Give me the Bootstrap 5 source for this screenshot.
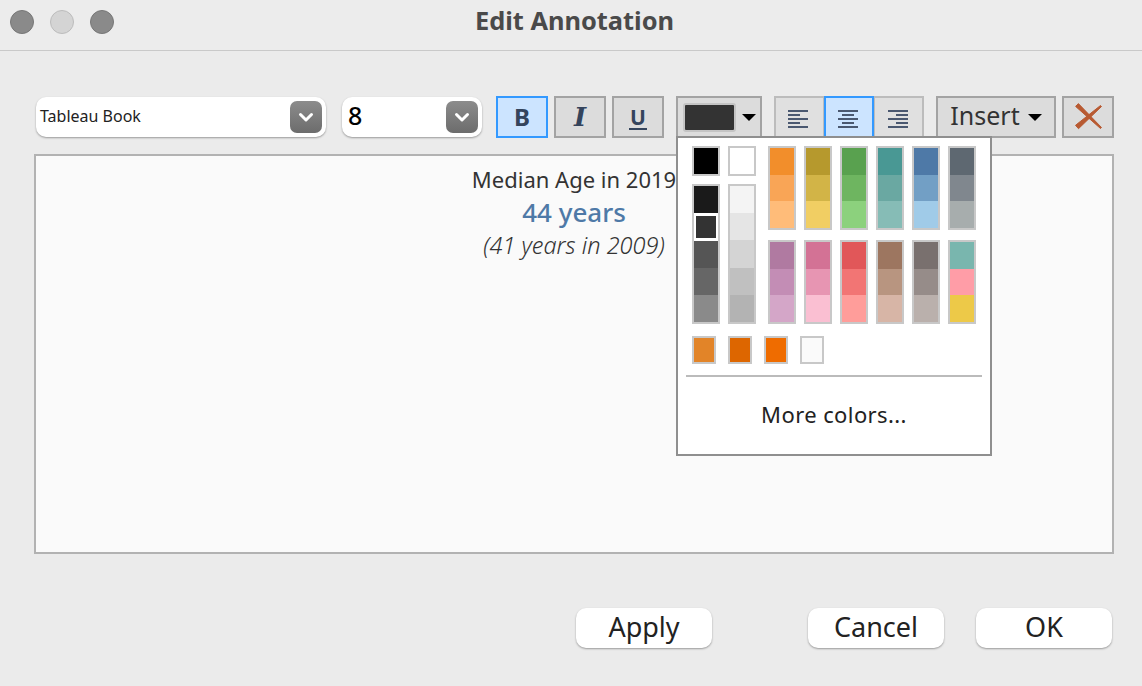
<!DOCTYPE html>
<html lang="en">
<head>
  <meta charset="UTF-8" />
  <meta name="viewport" content="width=device-width, initial-scale=1.0" />
  <title>Edit Annotation</title>
  <link href="https://cdn.jsdelivr.net/npm/bootstrap@5.3.0/dist/css/bootstrap.min.css" rel="stylesheet" />
  <style>
    body { background: #ebebeb; font-family: "Noto Sans", sans-serif; color: #333; height: 686px; overflow: hidden; }
    .title-bar { height: 51px; border-bottom: 1px solid #c9c9c9; background: #ececec; padding-left: 7px; }
    .title-text { font-size: 25.4px; font-weight: 700; color: #4a4a4a; line-height: 1; margin-top: -9px; }
    .light-row { left: 10px; top: 10px; gap: 16px; }
    .light-dot { width: 24px; height: 24px; border-radius: 50%; background: #8a8a8a; border: 1px solid #777; }
    .light-dot.off { background: #d4d4d4; border-color: #bcbcbc; }
    .dialog-body { padding: 45px 28px 0 34px; }
    .tool-row { height: 42px; }
    .combo-box { height: 40px; margin-top: 1px; background: #fff; border-radius: 10px; box-shadow: 0 1px 2px rgba(0,0,0,.35); padding: 0 4px; font-size: 16px; color: #222; }
    .combo-label { margin-top: -2px; }
    .combo-font { width: 290px; margin-left: 2px; margin-right: 16px; }
    .combo-size { width: 140px; margin-right: 14px; font-size: 25px; font-weight: 500; color: #000; padding-left: 6px; }
    .combo-arrow { width: 32px; height: 32px; border-radius: 7px; background: linear-gradient(#8c8c8c, #6c6c6c); }
    .tool-trio { gap: 6px; }
    .tool-btn { width: 52px; height: 42px; padding: 0; background: #dcdcdc; border: 2px solid #a3a3a3; border-radius: 0; color: #34445c; font-size: 24px; font-weight: 700; line-height: 1; }
    .tool-btn.on { background: #cce4ff; border-color: #3399ff; }
    .tool-btn.italic-btn { font-family: "DejaVu Serif", serif; font-style: italic; font-size: 26px; }
    .under-mark { border-bottom: 2px solid #34445c; padding: 0 1px; display: inline-block; line-height: 1.05; font-size: 21px; }
    .caret-mark { width: 0; height: 0; border-left: 7px solid transparent; border-right: 7px solid transparent; border-top: 7px solid #000; }
    .color-wrap { margin-left: 12px; }
    .color-btn { width: 86px; padding-left: 5px; padding-right: 4px; }
    .color-chip { width: 53px; height: 29px; background: #333; border: 2px solid #c4c4c4; border-radius: 3px; }
    .align-group { margin-left: 12px; width: 150px; height: 42px; }
    .align-btn { flex: 1 1 0; height: 42px; padding: 0 2px 0 0; background: #e0e0e0; border: 2px solid #bcbcbc; border-radius: 0; }
    .align-btn + .align-btn { margin-left: -2px; }
    .align-btn.on { background: #cce4ff; border-color: #3399ff; position: relative; z-index: 1; }
    .insert-btn { width: 120px; margin-left: 12px; font-size: 25px; font-weight: 400; color: #333; gap: 8px; }
    .insert-label { margin-top: -4px; }
    .close-btn { margin-left: 6px; }
    .color-menu { display: block; left: 0; top: 40px; width: 316px; height: 320px; padding: 8px 0 0 14px; margin: 0; background: #fff; border: 2px solid #8f8f8f; border-radius: 0; z-index: 5; }
    .swatch-cell { width: 28px; height: 30px; border: 2px solid #c8c8c8; }
    .swatch-stack { width: 28px; border: 2px solid #c8c8c8; display: flex; flex-direction: column; }
    .stack-tall { height: 140px; }
    .stack-mid { height: 84px; }
    .swatch-left { gap: 8px; width: 64px; margin-right: 12px; }
    .swatch-grid { display: grid; grid-template-columns: repeat(6, 28px); column-gap: 8px; row-gap: 10px; }
    .stack-seg { flex: 1 1 28px; }
    .stack-seg.picked { border-style: solid; border-color: #fff; border-width: 3px 2px; }
    .recent-row { gap: 12px; margin-top: 12px; }
    .recent-chip { width: 24px; height: 28px; border: 2px solid #c8c8c8; }
    .menu-line { width: 296px; margin: 11px 0 0 -6px; height: 2px; background: #bbb; }
    .more-colors { width: 296px; margin: 0 0 0 -6px; padding-top: 24px; font-size: 22px; letter-spacing: .4px; line-height: 27px; color: #222; text-align: center; }
    .editor-box { height: 400px; margin-top: 16px; background: #fafafa; border: 2px solid #b2b2b2; padding-top: 9px; text-align: center; }
    .note-title { font-size: 22px; line-height: 28px; color: #333; }
    .note-value { font-size: 26px; line-height: 38px; font-weight: 500; color: #4e79a7; }
    .note-sub { font-size: 23.5px; line-height: 28px; font-style: italic; font-weight: 300; color: #333; }
    .footer-row { margin-top: 54px; padding-right: 2px; }
    .plain-btn { width: 136px; height: 40px; padding: 0 0 4px; background: #fff; border: 0; border-radius: 10px; box-shadow: 0 1px 2px rgba(0,0,0,.35); font-size: 27px; line-height: 1; color: #222; }
    .apply-btn { margin-right: 96px; }
    .cancel-btn { margin-right: 32px; }
  </style>
</head>
<body>
  <div class="title-bar position-relative d-flex align-items-center justify-content-center">
    <div class="light-row position-absolute d-flex">
      <span class="light-dot"></span>
      <span class="light-dot off"></span>
      <span class="light-dot"></span>
    </div>
    <div class="title-text">Edit Annotation</div>
  </div>

  <div class="dialog-body">
    <div class="tool-row d-flex">
      <div class="combo-box combo-font d-flex align-items-center justify-content-between">
        <span class="combo-label">Tableau Book</span>
        <span class="combo-arrow d-flex align-items-center justify-content-center">
          <svg width="16" height="11" viewBox="0 0 16 11"><path d="M2.5 2.5l5.5 5.5 5.5-5.5" fill="none" stroke="#fff" stroke-width="3" stroke-linecap="round" stroke-linejoin="round" /></svg>
        </span>
      </div>
      <div class="combo-box combo-size d-flex align-items-center justify-content-between">
        <span class="combo-label">8</span>
        <span class="combo-arrow d-flex align-items-center justify-content-center">
          <svg width="16" height="11" viewBox="0 0 16 11"><path d="M2.5 2.5l5.5 5.5 5.5-5.5" fill="none" stroke="#fff" stroke-width="3" stroke-linecap="round" stroke-linejoin="round" /></svg>
        </span>
      </div>

      <div class="d-flex tool-trio">
        <button class="btn tool-btn on" type="button">B</button>
        <button class="btn tool-btn italic-btn" type="button">I</button>
        <button class="btn tool-btn" type="button"><span class="under-mark">U</span></button>
      </div>

      <div class="color-wrap position-relative">
        <button class="btn tool-btn color-btn d-flex align-items-center justify-content-between" type="button">
          <span class="color-chip"></span>
          <span class="caret-mark"></span>
        </button>
        <div class="dropdown-menu show color-menu">
          <div class="d-flex">
            <div class="swatch-left d-flex flex-wrap align-content-start" id="left-swatches"></div>
            <div class="swatch-grid" id="color-swatches"></div>
          </div>
          <div class="recent-row d-flex" id="recent-swatches"></div>
          <div class="menu-line"></div>
          <div class="more-colors">More colors...</div>
        </div>
      </div>

      <div class="btn-group align-group d-flex" role="group">
        <button class="btn align-btn" type="button">
          <svg width="20" height="18" viewBox="0 0 20 18"><path d="M0 1h20M0 5h12M0 9h20M0 13h12M0 17h20" stroke="#4a5870" stroke-width="2" /></svg>
        </button>
        <button class="btn align-btn on" type="button">
          <svg width="20" height="18" viewBox="0 0 20 18"><path d="M0 1h20M4 5h12M0 9h20M4 13h12M0 17h20" stroke="#4a5870" stroke-width="2" /></svg>
        </button>
        <button class="btn align-btn" type="button">
          <svg width="20" height="18" viewBox="0 0 20 18"><path d="M0 1h20M8 5h12M0 9h20M8 13h12M0 17h20" stroke="#4a5870" stroke-width="2" /></svg>
        </button>
      </div>

      <button class="btn tool-btn insert-btn d-flex align-items-center justify-content-center" type="button">
        <span class="insert-label">Insert</span><span class="caret-mark"></span>
      </button>
      <button class="btn tool-btn close-btn d-flex align-items-center justify-content-center" type="button">
        <svg width="28" height="28" viewBox="0 0 28 28"><path d="M1.6 3.4L4.4.6l23.1 23.9-1 1zM1.5 22.3L26.5 2.5l1 1L4.5 25.7z" fill="#b85a32" stroke="#b85a32" stroke-linejoin="round" /></svg>
      </button>
    </div>

    <div class="editor-box">
      <div class="note-title">Median Age in 2019</div>
      <div class="note-value">44 years</div>
      <div class="note-sub">(41 years in 2009)</div>
    </div>

    <div class="footer-row d-flex justify-content-end">
      <button class="btn plain-btn apply-btn" type="button">Apply</button>
      <button class="btn plain-btn cancel-btn" type="button">Cancel</button>
      <button class="btn plain-btn" type="button">OK</button>
    </div>
  </div>

  <script>
    const colorStacks = [
      ["#f28e2b", "#f9a556", "#ffbc79"],
      ["#b6992d", "#d2b447", "#f1ce63"],
      ["#59a14f", "#6eb560", "#8cd17d"],
      ["#499894", "#6aa8a2", "#86bcb6"],
      ["#4e79a7", "#729fc5", "#a0cbe8"],
      ["#5e6871", "#80878e", "#a7adad"],
      ["#b07aa1", "#c38db5", "#d4a6c8"],
      ["#d37295", "#e795b2", "#fabfd2"],
      ["#e15759", "#f27574", "#ff9d9a"],
      ["#9d7660", "#b89580", "#d7b5a6"],
      ["#79706e", "#968c89", "#bab0ac"],
      ["#79b6ae", "#ff9da7", "#edc948"]
    ];
    const grayStacks = [
      ["#1a1a1a", "#333333", "#555555", "#666666", "#8a8a8a"],
      ["#f4f4f4", "#e5e5e5", "#d4d4d4", "#c0c0c0", "#b3b3b3"]
    ];
    const recentColors = ["#e28428", "#dd6600", "#ef6c00", "#fafafa"];

    function makeStack(colors, sizeClass) {
      const stack = document.createElement("div");
      stack.className = "swatch-stack " + sizeClass;
      colors.forEach(color => {
        const seg = document.createElement("div");
        seg.className = "stack-seg" + (color === "#333333" ? " picked" : "");
        seg.style.backgroundColor = color;
        stack.appendChild(seg);
      });
      return stack;
    }

    function makeChip(color, className) {
      const chip = document.createElement("div");
      chip.className = className;
      chip.style.backgroundColor = color;
      return chip;
    }

    const left = document.getElementById("left-swatches");
    left.appendChild(makeChip("#000000", "swatch-cell"));
    left.appendChild(makeChip("#ffffff", "swatch-cell"));
    grayStacks.forEach(colors => left.appendChild(makeStack(colors, "stack-tall")));

    const grid = document.getElementById("color-swatches");
    colorStacks.forEach(colors => grid.appendChild(makeStack(colors, "stack-mid")));

    const recent = document.getElementById("recent-swatches");
    recentColors.forEach(color => recent.appendChild(makeChip(color, "recent-chip")));
  </script>
  <script src="https://cdn.jsdelivr.net/npm/bootstrap@5.3.0/dist/js/bootstrap.bundle.min.js"></script>
</body>
</html>
